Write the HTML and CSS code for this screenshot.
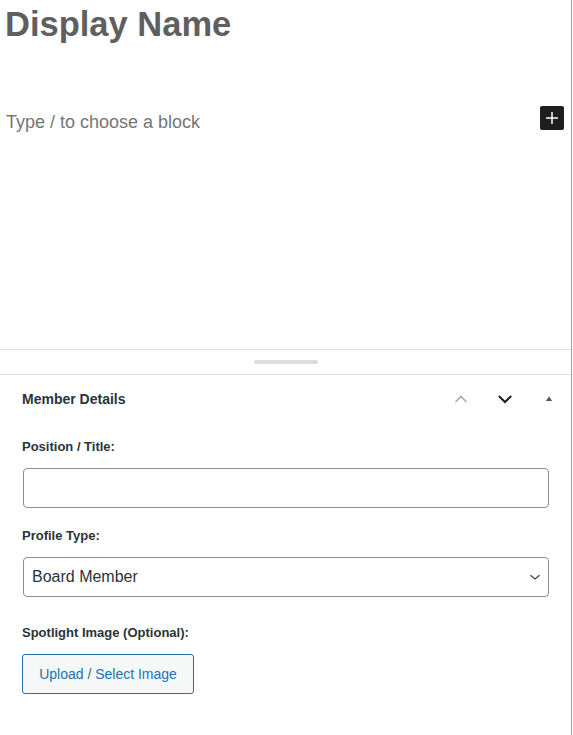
FILE: index.html
```html
<!DOCTYPE html>
<html lang="en">
<head>
<meta charset="utf-8">
<title>Member editor</title>
<link rel="stylesheet" href="styles.css">
</head>
<body>
<div class="page">
  <div class="editor">
    <h1 class="title">Display Name</h1>
    <div class="block-row">
      <p class="placeholder">Type / to choose a block</p>
      <button class="inserter" aria-label="Add block">
        <svg width="24" height="24" viewBox="0 0 24 24"><path d="M12 6v12M6 12h12" stroke="#fff" stroke-width="1.5" fill="none"/></svg>
      </button>
    </div>
  </div>
  <div class="resizer"><span class="handle"></span></div>
  <div class="metabox">
    <div class="meta-header">
      <h2 class="meta-title">Member Details</h2>
      <div class="meta-actions">
        <span class="meta-btn">
          <svg width="14" height="10" viewBox="0 0 14 10"><path d="M1.5 8L7 2.5 12.5 8" stroke="#a7aaad" stroke-width="1.6" fill="none"/></svg>
        </span>
        <span class="meta-btn">
          <svg width="16" height="10" viewBox="0 0 16 10"><path d="M1.8 2L8 8 14.2 2" stroke="#1e1e1e" stroke-width="2" fill="none"/></svg>
        </span>
        <span class="meta-btn">
          <svg width="8" height="6" viewBox="0 0 8 6"><path d="M4 0.6L7.2 5H0.8z" fill="#50575e"/></svg>
        </span>
      </div>
    </div>
    <div class="meta-body">
      <label class="field-label lbl-first">Position / Title:</label>
      <div class="text-input"></div>
      <label class="field-label lbl-second">Profile Type:</label>
      <div class="select">
        <span class="select-value">Board Member</span>
        <svg width="12" height="8" viewBox="0 0 12 8"><path d="M1.5 2.2L6 6 10.5 2.2" stroke="#3c434a" stroke-width="1.3" fill="none"/></svg>
      </div>
      <label class="field-label lbl-third">Spotlight Image (Optional):</label>
      <button class="upload-btn">Upload / Select Image</button>
    </div>
  </div>
</div>
</body>
</html>
```

FILE: styles.css
```css
* { box-sizing: border-box; }
html, body { margin: 0; padding: 0; background: #fff; }
body { font-family: "Liberation Sans", Arial, sans-serif; }

.page {
  width: 572px;
  height: 735px;
  border-right: 1px solid #9c9c9c;
  overflow: hidden;
}

.editor {
  height: 349px;
  padding: 4px 7px 0 6px;
}

.title {
  margin: 0 0 0 -1px;
  font-size: 34.5px;
  line-height: 41px;
  font-weight: 700;
  color: #5f5f5f;
}

.block-row {
  margin-top: 61px;
  display: flex;
  justify-content: space-between;
  align-items: flex-start;
}

.placeholder {
  margin: 4px 0 0;
  font-size: 18px;
  line-height: 24px;
  color: #757575;
}

.inserter {
  width: 24px;
  height: 24px;
  padding: 0;
  border: 0;
  border-radius: 2px;
  background: #1e1e1e;
  display: flex;
  align-items: center;
  justify-content: center;
}

.resizer {
  height: 26px;
  border-top: 1px solid #dcdcde;
  border-bottom: 1px solid #dcdcde;
  display: flex;
  justify-content: center;
  align-items: center;
  padding-left: 1px;
}

.handle {
  width: 64px;
  height: 4px;
  border-radius: 2px;
  background: #dcdcde;
}

.meta-header {
  height: 48px;
  display: flex;
  align-items: center;
  justify-content: space-between;
  padding-left: 22px;
}

.meta-title {
  margin: 0;
  font-size: 14px;
  font-weight: 700;
  color: #2c3338;
}

.meta-actions { display: flex; }

.meta-btn {
  width: 44px;
  height: 36px;
  display: flex;
  align-items: center;
  justify-content: center;
}

.meta-body {
  padding: 0 22px;
  display: flex;
  flex-direction: column;
  align-items: flex-start;
}

.field-label {
  display: block;
  font-size: 13px;
  line-height: 18px;
  font-weight: 700;
  color: #2c3338;
}

.lbl-first { margin-top: 15px; }
.lbl-second { margin-top: 19px; }
.lbl-third { margin-top: 27px; }

.text-input,
.select {
  margin: 12px 0 0 1px;
  width: 526px;
  height: 40px;
  border: 1px solid #8c8f94;
  border-radius: 4px;
  background: #fff;
}

.select {
  display: flex;
  align-items: center;
  justify-content: space-between;
  padding: 0 7px 0 8px;
}

.select-value {
  font-size: 16px;
  color: #2c3338;
}

.upload-btn {
  margin-top: 12px;
  width: 172px;
  height: 40px;
  border: 1px solid #2271b1;
  border-radius: 3px;
  background: #f6f7f7;
  color: #2271b1;
  font-family: "Liberation Sans", Arial, sans-serif;
  font-size: 14px;
  padding: 0;
}
```
